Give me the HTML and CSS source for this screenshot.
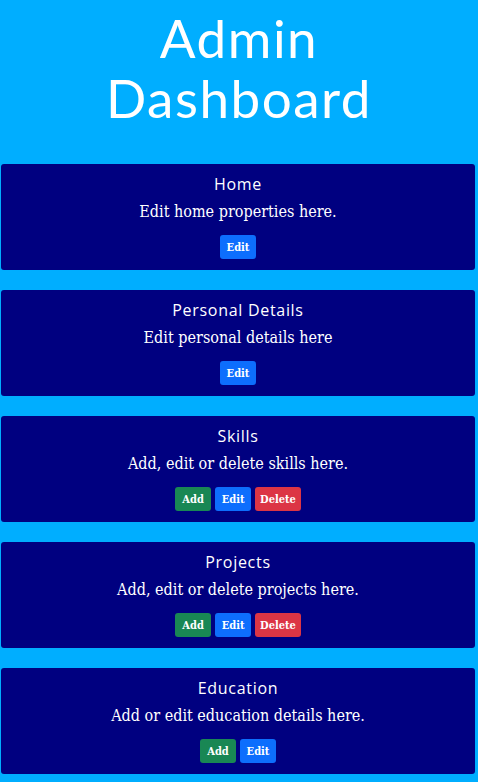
FILE: index.html
```html
<!DOCTYPE html>
<html>
<head>
<meta charset="utf-8">
<link rel="stylesheet" href="styles.css">
</head>
<body>
<h1 class="title"><span class="title-line">Admin</span><span class="title-line">Dashboard</span></h1>
<main class="cards">
  <section class="card">
    <h2 class="card-title">Home</h2>
    <p class="card-text">Edit home properties here.</p>
    <div class="actions"><button class="btn btn-blue">Edit</button></div>
  </section>
  <section class="card">
    <h2 class="card-title">Personal Details</h2>
    <p class="card-text">Edit personal details here</p>
    <div class="actions"><button class="btn btn-blue">Edit</button></div>
  </section>
  <section class="card">
    <h2 class="card-title">Skills</h2>
    <p class="card-text">Add, edit or delete skills here.</p>
    <div class="actions"><button class="btn btn-green">Add</button><button class="btn btn-blue">Edit</button><button class="btn btn-red">Delete</button></div>
  </section>
  <section class="card">
    <h2 class="card-title">Projects</h2>
    <p class="card-text">Add, edit or delete projects here.</p>
    <div class="actions"><button class="btn btn-green">Add</button><button class="btn btn-blue">Edit</button><button class="btn btn-red">Delete</button></div>
  </section>
  <section class="card">
    <h2 class="card-title">Education</h2>
    <p class="card-text">Add or edit education details here.</p>
    <div class="actions"><button class="btn btn-green">Add</button><button class="btn btn-blue">Edit</button></div>
  </section>
</main>
</body>
</html>
```
FILE: styles.css
```css
html, body {
  margin: 0;
  padding: 0;
  background: #00aeff;
  height: 100%;
}
body {
  color: #fff;
  font-family: "DejaVu Serif Condensed", "DejaVu Serif", serif;
  font-stretch: condensed;
  overflow: hidden;
}
.title {
  margin: 0;
  padding: 8px 0 36px;
  font-family: "Lato", sans-serif;
  font-stretch: normal;
  font-weight: 400;
  font-size: 53px;
  letter-spacing: 1.5px;
  text-align: center;
}
.title-line {
  display: block;
  line-height: 60px;
}
.cards {
  display: flex;
  flex-direction: column;
  gap: 20px;
  padding: 0 3px 0 1px;
}
.card {
  background: #000080;
  border-radius: 3px;
  padding: 10px 0 11px;
  text-align: center;
}
.card-title {
  margin: 0 0 6px;
  font-family: "Open Sans", sans-serif;
  font-stretch: normal;
  font-weight: 500;
  font-size: 16px;
  letter-spacing: 0.7px;
  line-height: 20px;
}
.card-text {
  margin: 0 0 11px;
  font-size: 16px;
  line-height: 24px;
}
.actions {
  display: flex;
  justify-content: center;
  gap: 4px;
}
.btn {
  border: 0;
  border-radius: 3px;
  color: #fff;
  font-family: "DejaVu Serif Condensed", "DejaVu Serif", serif;
  font-stretch: condensed;
  font-weight: bold;
  font-size: 11px;
  height: 24px;
  min-width: 36px;
  padding: 0 5px;
}
.btn-blue { background: #0d6efd; }
.btn-green { background: #198754; }
.btn-red { background: #dc3545; }
```
